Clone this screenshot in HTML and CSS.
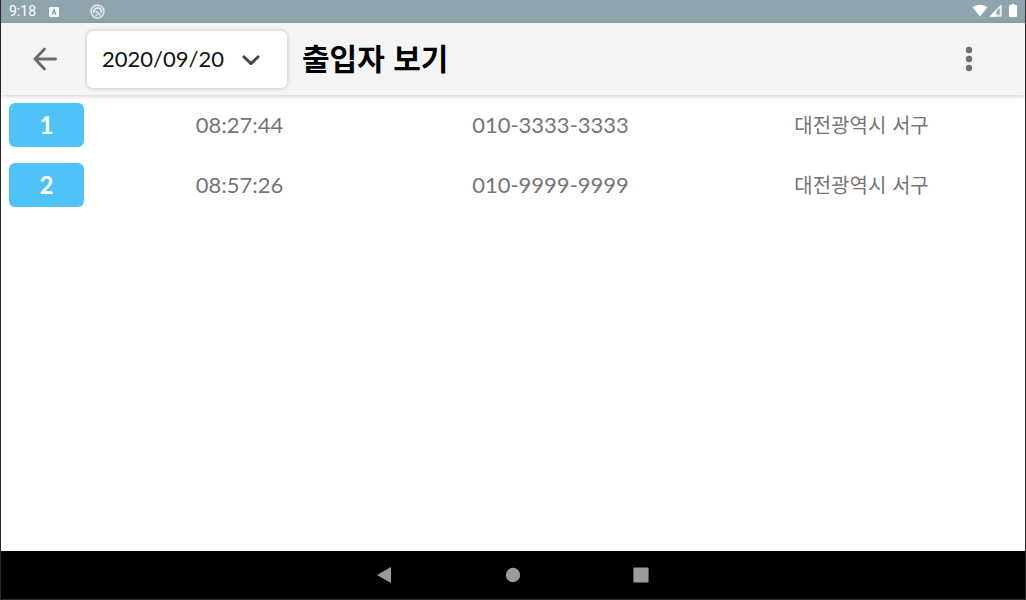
FILE: index.html
```html
<!DOCTYPE html>
<html lang="ko">
<head>
<meta charset="utf-8">
<meta name="viewport" content="width=device-width, initial-scale=1">
<title>출입자 보기</title>
<link rel="stylesheet" href="styles.css">
</head>
<body>
<div class="screen">
  <div class="status-bar">
    <span class="clock">9:18</span>
    <svg class="status-app" width="10" height="10" viewBox="0 0 10 10" aria-hidden="true">
      <rect width="10" height="10" rx="1" fill="#f4f6f7"/>
      <path d="M3 7.6 5 2.6 7 7.6M3.7 6h2.6" fill="none" stroke="#80949d" stroke-width="1.1"/>
    </svg>
    <svg class="status-sync" width="15" height="15" viewBox="0 0 15 15" aria-hidden="true">
      <circle cx="7.500" cy="7.500" r="6.400" fill="#94a6af" stroke="#dde3e6" stroke-width="1.700"/>
      <path d="M4 9A4 4 0 0 1 10.800 5.200L11.300 9M6 7l4.500 4.500M5.500 11h2" fill="none" stroke="#e6ebed" stroke-width="1.700"/>
    </svg>
    <div class="status-right">
      <svg width="16" height="13" viewBox="0 0 16 13" aria-hidden="true">
        <path d="M8 12.500.500 3.300C4.700-.2 11.300-.2 15.500 3.300Z" fill="#fff"/>
      </svg>
      <svg width="13" height="13" viewBox="0 0 13 13" aria-hidden="true">
        <path d="M.5 12.500 12.500.5v12Z" fill="#d0d8dc"/>
        <path d="M.5 12.500 7 6v6.500Z" fill="#fff"/>
        <path d="M1.500 12 12 1.500V12Z" fill="none" stroke="#fff"/>
        <path d="M8 10.500V7l2.500-2.500v6Z" fill="#90a4ae"/>
      </svg>
      <svg class="battery" width="8" height="13" viewBox="0 0 8 13" aria-hidden="true">
        <path d="M2.500 0h3v1H7q1 0 1 1v10q0 1-1 1H1q-1 0-1-1V2q0-1 1-1h1.500Z" fill="#fff"/>
      </svg>
    </div>
  </div>

  <header class="app-bar">
    <button class="icon-button" type="button" aria-label="뒤로">
      <svg width="26" height="26" viewBox="0 0 26 26" aria-hidden="true">
        <path d="M23.500 13H3M12.500 3 3 13l9.500 10" fill="none" stroke="#6b6b6b" stroke-width="2.800" stroke-linecap="round" stroke-linejoin="round"/>
      </svg>
    </button>
    <div class="date-picker">
      <select class="date-select" aria-label="날짜">
        <option>2020/09/20</option>
      </select>
      <svg class="chevron" width="20" height="12" viewBox="0 0 20 12" aria-hidden="true">
        <path d="M2 3 10 10.600 18 3" fill="none" stroke="#484848" stroke-width="3"/>
      </svg>
    </div>
    <h1 class="title">출입자 보기</h1>
    <button class="icon-button menu-button" type="button" aria-label="메뉴">
      <svg width="8" height="26" viewBox="0 0 8 26" fill="#6f6f6f" aria-hidden="true">
        <circle cx="4" cy="4" r="3.200"/><circle cx="4" cy="13" r="3.200"/><circle cx="4" cy="22" r="3.200"/>
      </svg>
    </button>
  </header>

  <main class="content">
    <table class="visitors">
      <tr>
        <th class="number" scope="row"><span class="badge">1</span></th>
        <td>08:27:44</td>
        <td>010-3333-3333</td>
        <td class="address">대전광역시 서구</td>
      </tr>
      <tr>
        <th class="number" scope="row"><span class="badge">2</span></th>
        <td>08:57:26</td>
        <td>010-9999-9999</td>
        <td class="address">대전광역시 서구</td>
      </tr>
    </table>
  </main>

  <nav class="nav-bar">
    <button class="nav-button" type="button" aria-label="이전">
      <svg width="16" height="16" viewBox="0 0 16 16" aria-hidden="true"><path d="M0 8 14 0v16Z" fill="#9b9b9b"/></svg>
    </button>
    <button class="nav-button" type="button" aria-label="홈">
      <svg width="16" height="16" viewBox="0 0 16 16" aria-hidden="true"><circle cx="8" cy="8" r="7.200" fill="#9b9b9b"/></svg>
    </button>
    <button class="nav-button" type="button" aria-label="최근 앱">
      <svg width="16" height="16" viewBox="0 0 16 16" aria-hidden="true"><rect x=".4" y=".4" width="15.200" height="15.200" rx="1" fill="#9b9b9b"/></svg>
    </button>
  </nav>
</div>
</body>
</html>
```
FILE: styles.css
```css
* {
  box-sizing: border-box;
}

body {
  margin: 0;
  background: #fff;
  color: #000;
  font-family: Lato, "Noto Sans CJK KR", sans-serif;
}

button {
  display: flex;
  align-items: center;
  justify-content: center;
  padding: 0;
  border: 0;
  background: none;
  cursor: pointer;
}

svg {
  display: block;
  flex: none;
}

.screen {
  display: flex;
  flex-direction: column;
  min-height: 100vh;
  border: 1px solid #2b2b2b;
  border-top: 0;
}

.status-bar {
  display: flex;
  align-items: center;
  height: 23px;
  padding: 0 8px;
  background: #90a4ae;
  color: #fff;
  font: 14px/20px Roboto, sans-serif;
}

.clock {
  padding-bottom: 2px;
}

.status-app {
  margin-left: 13px;
}

.status-sync {
  margin-left: 31px;
}

.status-right {
  display: flex;
  align-items: center;
  gap: 1px;
  margin-left: auto;
  padding-bottom: 2px;
}

.battery {
  margin-left: 6px;
}

.app-bar {
  display: flex;
  align-items: center;
  height: 72px;
  padding: 0 32px 0 31px;
  background: #f4f4f4;
  box-shadow: 0 1px 5px rgba(0, 0, 0, 0.2);
}

.icon-button {
  height: 48px;
}

.menu-button {
  width: 48px;
  margin-left: auto;
}

.date-picker {
  display: grid;
  align-items: center;
  width: 200px;
  margin-left: 29px;
  border-radius: 6px;
  background: #fff;
  box-shadow: 0 0 4px rgba(0, 0, 0, 0.24);
}

.date-select {
  grid-area: 1 / 1;
  appearance: none;
  width: 100%;
  height: 57px;
  padding: 0 48px 2px 15px;
  border: 0;
  border-radius: 6px;
  background: transparent;
  color: #111;
  font: 22px Lato, sans-serif;
}

.chevron {
  grid-area: 1 / 1;
  justify-self: end;
  margin-right: 26px;
  pointer-events: none;
}

.title {
  margin: 0 0 0 15px;
  padding-bottom: 4px;
  font: 700 30px/40px "Noto Sans CJK KR", sans-serif;
}

.content {
  flex: 1;
  padding: 0 8px;
}

.visitors {
  width: 100%;
  table-layout: fixed;
  border-collapse: collapse;
  color: #757575;
  font-size: 22px;
  line-height: 44px;
  text-align: center;
}

.visitors th,
.visitors td {
  padding: 8px 0;
}

.visitors .number {
  width: 75px;
}

.visitors .address {
  font-family: "Noto Sans CJK KR", sans-serif;
  font-size: 20px;
}

.badge {
  display: block;
  border-radius: 6px;
  background: #4fc3f7;
  color: #fff;
  font-size: 24px;
  font-weight: 700;
}

.nav-bar {
  display: flex;
  justify-content: center;
  gap: 80px;
  height: 48px;
  background: #000;
}

.nav-button {
  width: 48px;
}
```
